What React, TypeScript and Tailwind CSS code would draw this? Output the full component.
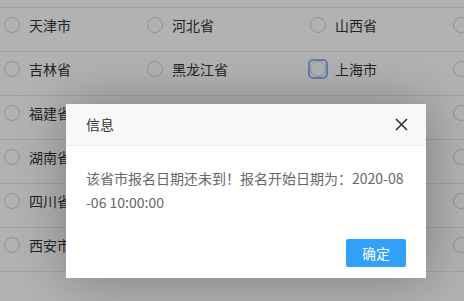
import React from 'react';

const rows: { name: string; focused?: boolean }[][] = [
  [{ name: '天津市' }, { name: '河北省' }, { name: '山西省' }, { name: '' }],
  [{ name: '吉林省' }, { name: '黑龙江省' }, { name: '上海市', focused: true }, { name: '' }],
  [{ name: '福建省' }, { name: '江西省' }, { name: '山东省' }, { name: '' }],
  [{ name: '湖南省' }, { name: '广东省' }, { name: '广西省' }, { name: '' }],
  [{ name: '四川省' }, { name: '贵州省' }, { name: '云南省' }, { name: '' }],
  [{ name: '西安市' }, { name: '甘肃省' }, { name: '青海省' }, { name: '' }],
];

function Radio({ name, focused }: { name: string; focused?: boolean }) {
  return (
    <label className="flex items-center h-4 gap-[9px] whitespace-nowrap">
      <span
        className={
          focused
            ? 'shrink-0 rounded-[3px] outline-2 outline-offset-[0px] outline-[#8fb2f8] [outline-style:solid]'
            : 'shrink-0'
        }
      >
        <span className="block w-4 h-4 rounded-full border border-[#d2d2d2] bg-white" />
      </span>
      {name && <span className="text-[14px] leading-4 text-[#333]">{name}</span>}
    </label>
  );
}

export default function App() {
  return (
    <div
      className="relative w-[464px] h-[301px] overflow-hidden bg-white"
      style={{ fontFamily: '"Noto Sans CJK SC", "Noto Sans", sans-serif' }}
    >
      <div className="pt-[7px]">
        <div className="border-b border-[#e6e6e6]">
          {rows.map((row, i) => (
            <div
              key={i}
              className="h-[44px] border-t border-[#e6e6e6] pt-[9px] pl-[4px] grid grid-cols-[143px_163px_143px_1fr]"
            >
              {row.map((r, j) => (
                <Radio key={j} name={r.name} focused={r.focused} />
              ))}
            </div>
          ))}
        </div>
      </div>

      <div className="absolute inset-0 bg-black/30" />

      <div className="absolute left-[66px] top-[104px] w-[360px] bg-white shadow-[1px_1px_50px_rgba(0,0,0,0.3)]">
        <div className="h-[42px] bg-[#f8f8f8] border-b border-[#eee] flex items-center justify-between pl-5 pr-[18px]">
          <span className="text-[14px] text-[#333]">信息</span>
          <svg width="13" height="13" viewBox="0 0 13 13" className="text-[#333]">
            <path d="M1 1 L12 12 M12 1 L1 12" stroke="currentColor" strokeWidth="1.6" />
          </svg>
        </div>
        <div className="p-5 text-[14px] leading-6 text-[#666]">
          <div className="whitespace-nowrap">该省市报名日期还未到！报名开始日期为：2020-08</div>
          <div className="whitespace-nowrap">-06 10:00:00</div>
        </div>
        <div className="flex justify-end pr-5 pt-[5px] pb-[11px]">
          <button className="h-7 w-[60px] rounded-[2px] bg-[#31a0fa] text-white text-[14px] leading-none flex items-center justify-center">
            确定
          </button>
        </div>
      </div>
    </div>
  );
}
